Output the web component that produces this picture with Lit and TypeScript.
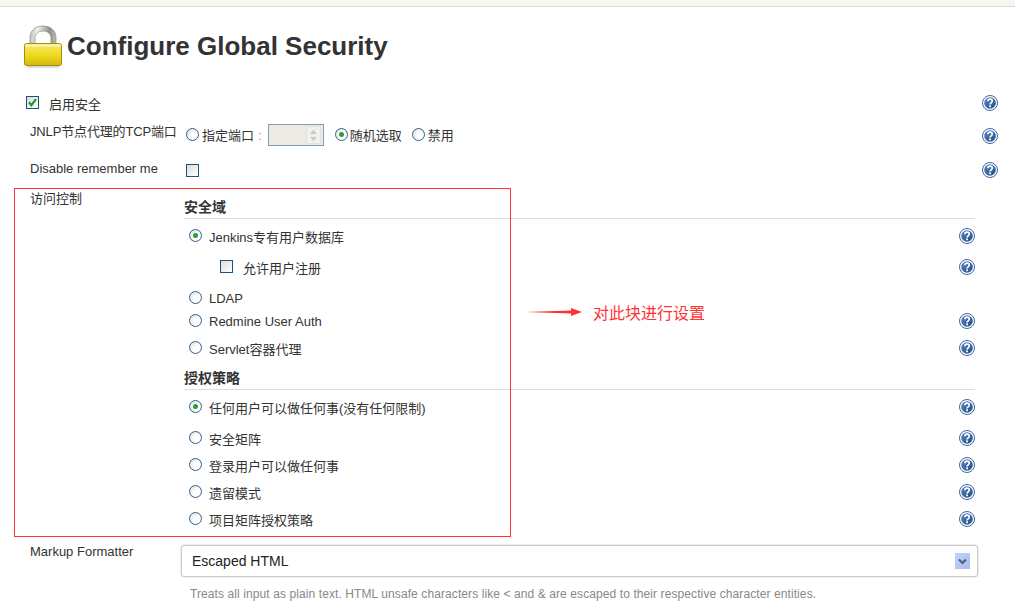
import { LitElement, html, css, svg } from "lit";
import { customElement } from "lit/decorators.js";

const helpIcon = html`<svg class="help" viewBox="0 0 16 16" width="16" height="16" aria-hidden="true">
  <defs><linearGradient id="hg" x1="0" y1="0" x2="1" y2="1"><stop offset="0" stop-color="#5d86bd"/><stop offset="1" stop-color="#1f4b8c"/></linearGradient></defs>
  <circle cx="8" cy="8" r="7.5" fill="#fff" stroke="#3a68a6" stroke-width="1"/>
  <circle cx="8" cy="8" r="5.8" fill="url(#hg)"/>
  <path d="M5.900 6.200C6 4.800 7 4.200 8.100 4.200c1.300 0 2.200.8 2.200 1.900 0 1.800-2.200 1.700-2.200 3.400" fill="none" stroke="#fff" stroke-width="1.700"/>
  <rect x="7.200" y="10.400" width="1.800" height="1.800" fill="#fff"/>
</svg>`;

const radio = (on = false) => html`<span class="radio ${on ? "on" : ""}"></span>`;
const check = (on = false) => html`<span class="check">${on
  ? svg`<svg viewBox="0 0 11 11" width="11" height="11"><path d="M2 5.200 4.400 8.200 9 2.200" fill="none" stroke="#1d9a2a" stroke-width="2.200"/></svg>`
  : ""}</span>`;

type Row = { label: string; on?: boolean; gap: string; help?: boolean };

const realm: Row[] = [
  { label: "Jenkins专有用户数据库", on: true, gap: "m7", help: true },
];
const realm2: Row[] = [
  { label: "LDAP", gap: "m11" },
  { label: "Redmine User Auth", gap: "m3", help: true },
  { label: "Servlet容器代理", gap: "m7", help: true },
];
const auth: Row[] = [
  { label: "任何用户可以做任何事(没有任何限制)", on: true, gap: "m7", help: true },
  { label: "安全矩阵", gap: "m11", help: true },
  { label: "登录用户可以做任何事", gap: "m7", help: true },
  { label: "遗留模式", gap: "m7", help: true },
  { label: "项目矩阵授权策略", gap: "m7", help: true },
];

@customElement("app-root")
export class AppRoot extends LitElement {
  static styles = css`
    :host {
      display: block;
      position: relative;
      width: 1015px;
      height: 604px;
      overflow: hidden;
      background: #fff;
      color: #333;
      font: 13px "Liberation Sans", "Noto Sans CJK SC", sans-serif;
    }
    .topbar { height: 6px; background: #f6f7f1; border-bottom: 1px solid #dcdcd6; }
    header { display: flex; align-items: flex-start; height: 81px; padding: 18px 0 0 24px; box-sizing: border-box; gap: 5px; }
    h1 { margin: 6px 0 0; font-size: 26px; line-height: 30px; font-weight: 700; color: #333; white-space: nowrap; }
    .lock { flex: none; display: block; }

    .form { padding-left: 30px; }
    .top-row { display: grid; grid-template-columns: 151px 1fr 16px; padding-right: 17px; align-items: center; height: 20px; }
    .r1 { margin-top: 5px; grid-template-columns: 1fr 16px; }
    .r1 .first { display: flex; align-items: center; margin-left: -4px; gap: 10px; }
    .r2 { margin-top: 11px; }
    .r3 { margin-top: 15px; }
    .r2 .lbl { position: relative; top: -5px; white-space: nowrap; letter-spacing: -.15px; }
    .r3 .lbl { position: relative; top: -1px; }
    .r2 > .help { position: relative; top: 1px; }
    .r3 > .help { position: relative; top: 1px; }
    .ports { display: flex; align-items: center; margin-left: 5px; white-space: nowrap; }
    .ports .t { margin-left: 3px; position: relative; top: -1px; }
    .ports .t.tight { margin-left: 2px; }
    .colon { color: #999; margin: 0 6px 0 4px; position: relative; top: 0; }
    .spin { width: 56px; height: 22px; box-sizing: border-box; border: 1px solid #7f9db9; background: #ebeae4; display: flex; justify-content: flex-end; align-items: center; padding-right: 2px; margin: 0 11px 0 0; position: relative; }
    .spin i { display: block; width: 15px; height: 18px; background: #f1f1ee; border: 1px solid #e2e2dc; box-sizing: border-box; }
    .spin svg { display: block; margin: 2px 0 0 2px; }
    .gap10 { margin-left: 10px; }
    .r3 .check { margin-left: 5px; top: 3px; }

    .access { display: grid; grid-template-columns: 154px 1fr; margin-top: 12px; padding-right: 40px; }
    .access .lbl { line-height: 15px; }
    .head { height: 22px; line-height: 22px; font-weight: 700; font-size: 14px; border-bottom: 1px solid #ddd; }
    .h1 { margin-top: 5px; }
    .h2 { margin-top: 9px; }
    .opt { display: grid; grid-template-columns: 1fr 16px; align-items: center; height: 20px; }
    .opt .c { display: flex; align-items: center; margin-left: 5px; gap: 7px; }
    .opt .c > span:last-child { position: relative; top: 0; }
    .opt.nested .c { margin-left: 36px; gap: 10px; }
    .m3 { margin-top: 3px; }
    .m7 { margin-top: 7px; }
    .m11 { margin-top: 11px; }

    .markup { display: grid; grid-template-columns: 151px 1fr; margin-top: 16px; padding-right: 37px; }
    .markup .lbl { line-height: 15px; margin-top: -1px; }
    .select { height: 32px; box-sizing: border-box; border: 1px solid #ccc; border-radius: 3px; display: flex; align-items: center; justify-content: space-between; padding: 0 7px 0 10px; font-size: 14px; color: #222; box-shadow: 0 0 0 .5px #ddd; }
    .select i { display: flex; width: 15px; height: 16px; align-items: center; justify-content: center; background: linear-gradient(135deg, #c2d3f7, #a5bdf0); }
    .desc { margin: 10px 0 0 151px; padding-left: 9px; color: #888; font-size: 12px; white-space: nowrap; line-height: 14px; letter-spacing: .093px; }

    .radio { flex: none; display: inline-block; box-sizing: border-box; width: 13px; height: 13px; border-radius: 50%; border: 1px solid #2f5f8f; background: radial-gradient(circle at 65% 65%, #fff 30%, #dcdcd6 100%); position: relative; top: -1px; }
    .radio.on::after { content: ""; position: absolute; left: 3px; top: 3px; width: 5px; height: 5px; border-radius: 50%; background: #22a33a; }
    .check { flex: none; display: inline-block; box-sizing: border-box; width: 13px; height: 13px; border: 1px solid #1c5180; background: linear-gradient(135deg, #dcdcd7, #fff); position: relative; top: -1px; }
    .check svg { display: block; margin: 0; }
    .help { display: block; }

    .redbox { position: absolute; left: 14px; top: 188px; width: 497px; height: 349px; box-sizing: border-box; border: 1px solid #f33; pointer-events: none; }
    .arrow { position: absolute; left: 525px; top: 306px; display: block; }
    .note { position: absolute; left: 593px; top: 304px; font-size: 16px; line-height: 20px; color: #f33; white-space: nowrap; }
  `;

  private opt(r: Row, extra = "") {
    return html`<div class="opt ${r.gap} ${extra}">
      <div class="c">${radio(r.on)}<span>${r.label}</span></div>
      ${r.help ? helpIcon : html`<span></span>`}
    </div>`;
  }

  render() {
    return html`
      <div class="topbar"></div>
      <header>
        <svg class="lock" width="38" height="44" viewBox="0 0 38 44" aria-hidden="true">
          <defs>
            <linearGradient id="body" x1="0" y1="0" x2="0" y2="1"><stop offset="0" stop-color="#f6e878"/><stop offset=".5" stop-color="#f0dc20"/><stop offset="1" stop-color="#d2b90c"/></linearGradient>
            <linearGradient id="sh" x1="0" y1="0" x2="1" y2="0"><stop offset="0" stop-color="#c4c4bc"/><stop offset=".3" stop-color="#f2f2ee"/><stop offset=".75" stop-color="#8f8f88"/><stop offset="1" stop-color="#bdbdb6"/></linearGradient>
            <linearGradient id="shd" x1="0" y1="0" x2="0" y2="1"><stop offset="0" stop-color="#bbb"/><stop offset="1" stop-color="#fff"/></linearGradient>
          </defs>
          <rect x="3" y="40" width="32" height="4" fill="url(#shd)"/>
          <path d="M6 19V12.500C6 5.500 11.500 1 19 1s13 4.500 13 11.500V19h-5V13c0-4-3.200-7-8-7s-8 3-8 7v6z" fill="url(#sh)" stroke="#8a8a84" stroke-width=".7"/>
          <rect x=".5" y="18.500" width="37" height="22" rx="2" fill="url(#body)" stroke="#a08f10"/>
          <rect x="1.500" y="19.500" width="35" height="2" fill="#fbf4b0"/>
        </svg>
        <h1>Configure Global Security</h1>
      </header>

      <div class="form">
        <div class="top-row r1">
          <div class="first">${check(true)}<span>启用安全</span></div>
          ${helpIcon}
        </div>
        <div class="top-row r2">
          <div class="lbl">JNLP节点代理的TCP端口</div>
          <div class="ports">
            ${radio()}<span class="t">指定端口</span><span class="colon">:</span>
            <div class="spin"><i><svg width="9" height="13" viewBox="0 0 9 13"><path d="M1 5 4.500 1 8 5zM1 8h7l-3.500 4z" fill="#c9c9c4"/></svg></i></div>
            ${radio(true)}<span class="t tight">随机选取</span>
            <span class="gap10"></span>
            ${radio()}<span class="t">禁用</span>
          </div>
          ${helpIcon}
        </div>
        <div class="top-row r3">
          <div class="lbl">Disable remember me</div>
          <div>${check()}</div>
          ${helpIcon}
        </div>

        <div class="access">
          <div class="lbl">访问控制</div>
          <div>
            <div class="head h1">安全域</div>
            ${realm.map((r) => this.opt(r))}
            <div class="opt nested m11">
              <div class="c">${check()}<span>允许用户注册</span></div>
              ${helpIcon}
            </div>
            ${realm2.map((r) => this.opt(r))}
            <div class="head h2">授权策略</div>
            ${auth.map((r) => this.opt(r))}
          </div>
        </div>

        <div class="markup">
          <div class="lbl">Markup Formatter</div>
          <div class="select">
            <span>Escaped HTML</span>
            <i><svg width="9" height="7" viewBox="0 0 9 7"><path d="M1 1.500 4.500 5 8 1.500" fill="none" stroke="#4d5a78" stroke-width="2"/></svg></i>
          </div>
        </div>
        <div class="desc">Treats all input as plain text. HTML unsafe characters like &lt; and &amp; are escaped to their respective character entities.</div>
      </div>

      <div class="redbox"></div>
      <svg class="arrow" width="58" height="12" viewBox="0 0 58 12" aria-hidden="true"><path d="M0 6 46 4.500V2L57 6 46 10V7.500z" fill="#f33"/></svg>
      <div class="note">对此块进行设置</div>
    `;
  }
}
